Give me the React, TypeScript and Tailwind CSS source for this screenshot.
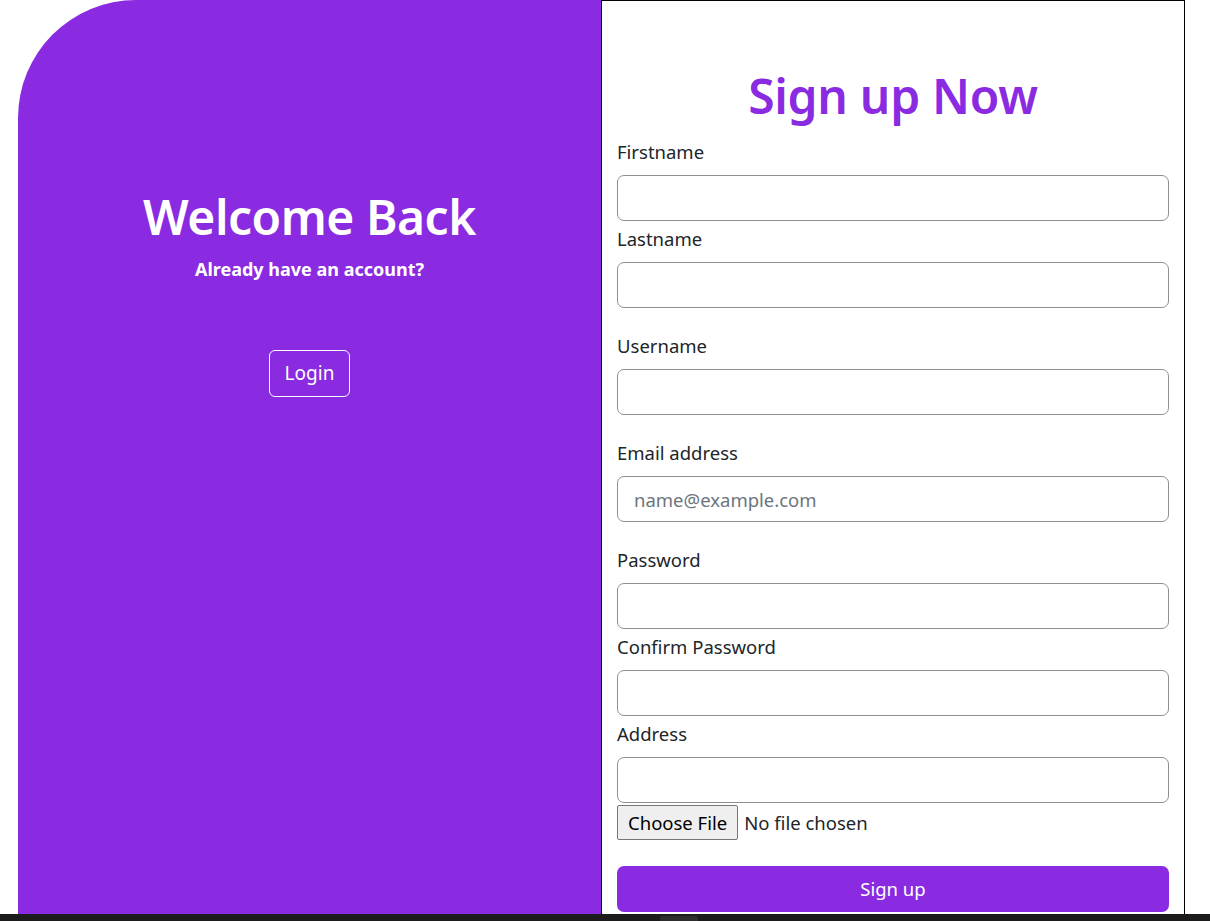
const font = { fontFamily: '"Noto Sans", "Open Sans", Arial, sans-serif' };

type Field = { label: string; gap: string; placeholder?: string; type?: string };

const fields: Field[] = [
  { label: "Firstname", gap: "mt-0" },
  { label: "Lastname", gap: "mt-[3px]" },
  { label: "Username", gap: "mt-[23px]" },
  { label: "Email address", gap: "mt-[23px]", placeholder: "name@example.com", type: "email" },
  { label: "Password", gap: "mt-[23px]", type: "password" },
  { label: "Confirm Password", gap: "mt-[3px]", type: "password" },
  { label: "Address", gap: "mt-[3px]" },
];

export default function App() {
  return (
    <div className="w-[1210px] h-[921px] overflow-hidden bg-white flex flex-col" style={font}>
      <div className="flex h-[914px] pl-[18px]">
        <div className="w-[583px] h-full bg-[#8a2be2] rounded-tl-[118px] flex flex-col items-center pt-[188px] text-white">
          <h1 className="text-[48px] leading-[58px] font-semibold tracking-[-0.5px]">Welcome Back</h1>
          <p className="mt-[9px] text-[18px] leading-[28px] font-bold">Already have an account?</p>
          <button className="mt-[67px] h-[47px] px-[15px] border border-white rounded-[6px] text-[19px] leading-none">
            Login
          </button>
        </div>

        <div className="w-[584px] h-full border-t border-l border-r border-black px-[15px] pt-[66px]">
          <h1 className="text-center text-[48px] leading-[58px] font-semibold text-[#8a2be2] tracking-[-0.3px]">
            Sign up Now
          </h1>
          <form className="mt-[12px] flex flex-col">
            {fields.map((f) => (
              <div key={f.label} className={f.gap}>
                <label className="block text-[18.5px] leading-[29px] text-[#212529] mb-[9px]">{f.label}</label>
                <input
                  type={f.type ?? "text"}
                  placeholder={f.placeholder}
                  className="block w-[552px] h-[46px] border border-[#8f8f8f] rounded-[7px] px-[16px] text-[18.5px] text-[#212529] placeholder:text-[#6c757d] outline-none"
                />
              </div>
            ))}
            <div className="mt-[2px] flex items-center gap-[6px] text-[18.5px] text-[#212529]">
              <span className="h-[35px] px-[10px] flex items-center bg-[#efefef] border border-[#767676] rounded-[2px] text-black">
                Choose File
              </span>
              <span>No file chosen</span>
            </div>
            <button
              type="button"
              className="mt-[26px] w-[552px] h-[46px] bg-[#8a2be2] rounded-[7px] text-white text-[18.5px]"
            >
              Sign up
            </button>
          </form>
        </div>
      </div>
      <div className="h-[7px] bg-[#1c1c1c] relative">
        <div className="absolute left-[660px] top-[2px] w-[38px] h-[5px] rounded-t-[3px] bg-[#2e2e2e]" />
      </div>
    </div>
  );
}
